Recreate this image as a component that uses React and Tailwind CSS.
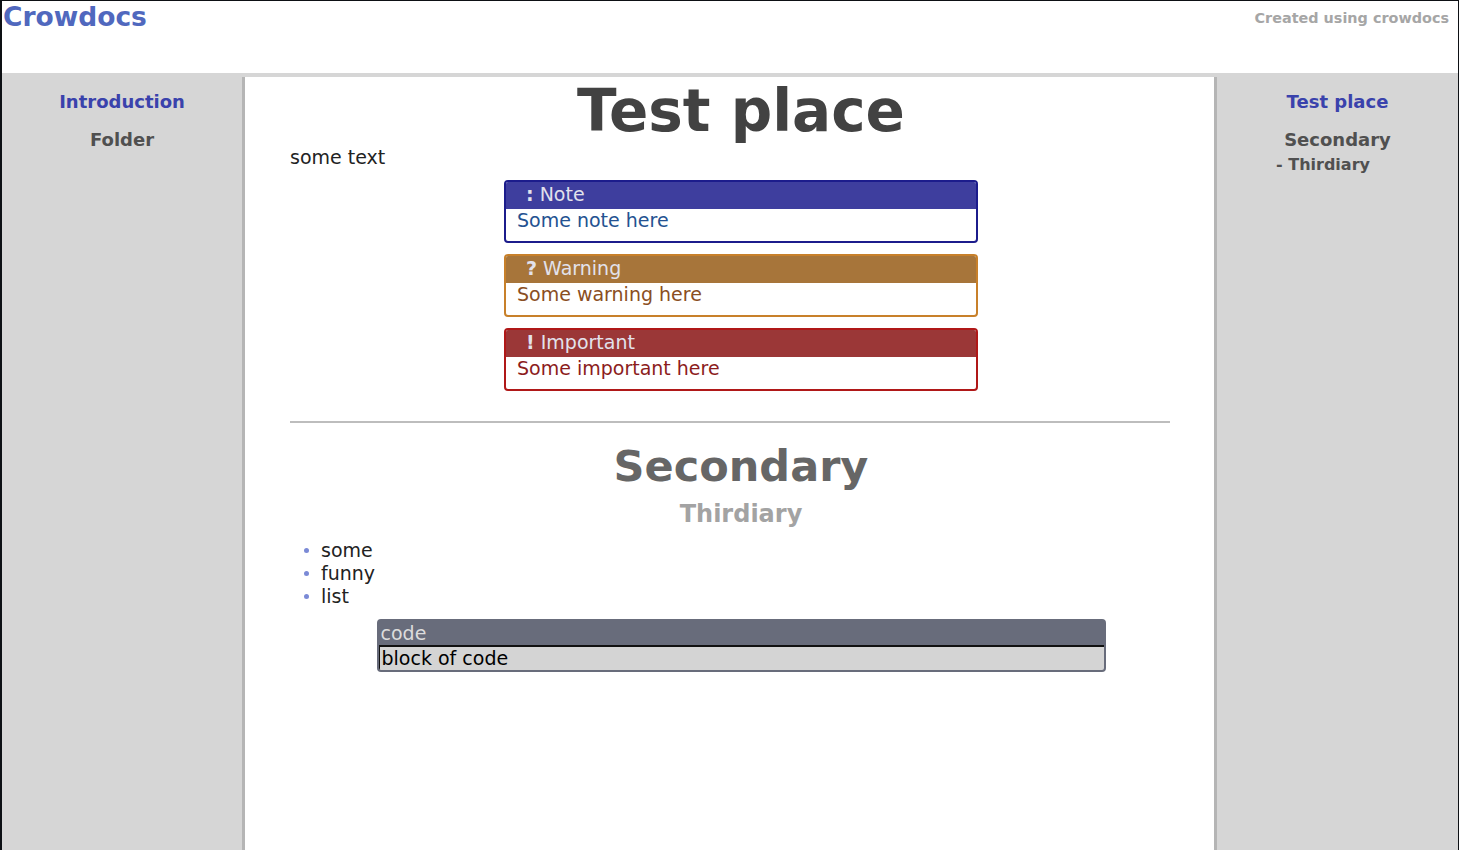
import React from "react";

function Alert({ sym, title, text, head, border, color }) {
  return (
    <div className={`w-[474px] mx-auto rounded-[4px] border-2 overflow-hidden bg-white ${border}`}>
      <div className={`${head} pl-[20px] pt-[1px] pb-[4px] text-[19px] leading-[22px] text-[#e2e2ec]`}>
        <span className="font-bold">{sym}</span> {title}
      </div>
      <div className={`pl-[11px] pb-[10px] text-[19px] leading-[22px] ${color}`}>{text}</div>
    </div>
  );
}

export default function App() {
  return (
    <div className="min-h-screen h-[850px] flex flex-col border-l-2 border-t border-r border-[#0d1014] font-['DejaVu_Sans',sans-serif] bg-[#d6d6d6] overflow-hidden">
      <header className="h-[72px] bg-white flex justify-between items-start shrink-0">
        <div className="pl-[1px] text-[26.5px] leading-[31px] font-bold text-[#5068be]">Crowdocs</div>
        <div className="pt-[9px] pr-[9px] text-[14.4px] leading-[16px] font-bold text-[#a6a6a6]">Created using crowdocs</div>
      </header>
      <div className="flex flex-1 pt-[4px]">
        <aside className="w-[240px] shrink-0 pt-[14px] text-center text-[18px] leading-[21px] font-bold">
          <div className="text-[#3a42ac]">Introduction</div>
          <div className="mt-[17px] text-[#505050]">Folder</div>
        </aside>
        <main className="w-[975px] shrink-0 bg-white border-l-[3px] border-r-[3px] border-[#b5b5b5] pl-[45px] pr-[22px] text-[#222]">
          <h1 className="text-center text-[58px] leading-[68px] font-bold text-[#424242]">Test place</h1>
          <p className="mt-[1px] text-[19px] leading-[22px]">some text</p>
          <div className="mt-[12px] flex flex-col gap-[11px]">
            <Alert sym=":" title="Note" text="Some note here" head="bg-[#3e3e9e]" border="border-[#1c1c8c]" color="text-[#245291]" />
            <Alert sym="?" title="Warning" text="Some warning here" head="bg-[#a7753a]" border="border-[#c8802a]" color="text-[#8a4e22]" />
            <Alert sym="!" title="Important" text="Some important here" head="bg-[#9b3737]" border="border-[#b01818]" color="text-[#8c1c1c]" />
          </div>
          <div className="mt-[30px] mr-[22px] h-[2px] bg-[#bdbdbd]" />
          <h2 className="mt-[18px] text-center text-[43px] leading-[50px] font-bold text-[#666666]">Secondary</h2>
          <h3 className="mt-[9px] text-center text-[24px] leading-[28px] font-bold text-[#a3a3a3]">Thirdiary</h3>
          <ul className="mt-[11px] text-[19px] leading-[23px]">
            {["some", "funny", "list"].map((t) => (
              <li key={t} className="flex items-center">
                <span className="ml-[14px] mr-[12px] w-[5px] h-[5px] rounded-full bg-[#7b8ad6]" />
                {t}
              </li>
            ))}
          </ul>
          <div className="mt-[11px] w-[729px] mx-auto rounded-[4px] border-2 border-[#686c7b] bg-[#686c7b] overflow-hidden">
            <div className="pl-[2px] text-[19px] leading-[24px] text-[#dcdcdc]">code</div>
            <div className="bg-[#d4d4d4] border-t-2 border-l border-[#111] pl-[2px] text-[19px] leading-[23px] text-black">block of code</div>
          </div>
        </main>
        <aside className="flex-1 pt-[14px] text-[18px] leading-[21px] font-bold">
          <div className="text-center text-[#3a42ac]">Test place</div>
          <div className="mt-[17px] text-center text-[#505050]">Secondary</div>
          <div className="mt-[5px] pl-[59px] text-[16px] leading-[19px] text-[#505050]">- Thirdiary</div>
        </aside>
      </div>
    </div>
  );
}
